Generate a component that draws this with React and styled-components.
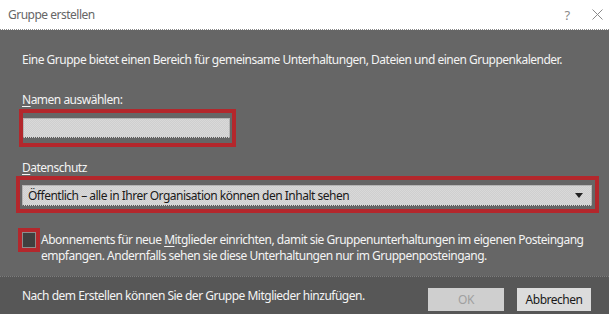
import styled, { createGlobalStyle } from 'styled-components';

const RED = '#b3272c';

const Global = createGlobalStyle`
  html, body { margin: 0; padding: 0; background: #666; }
  body {
    font-family: 'Noto Sans', 'Open Sans', sans-serif;
    font-size: 12px;
    letter-spacing: -0.5px;
  }
`;

const Dialog = styled.div`
  width: 609px;
  height: 314px;
  display: flex;
  flex-direction: column;
  overflow: hidden;
`;

const TitleBar = styled.div`
  height: 29px;
  flex: none;
  background: #fff;
  display: flex;
  align-items: center;
  padding-left: 8px;
  color: #666;
  font-size: 12px;
  border-bottom: 1px dotted #8a8a8a;
`;

const Title = styled.div`
  flex: 1;
`;

const TitleButton = styled.div`
  width: ${p => p.$w}px;
  display: flex;
  justify-content: center;
  align-items: center;
  color: #8a8a8a;
  font-size: 13px;
`;

const Body = styled.div`
  flex: 1;
  background: #666;
  color: #f4f4f4;
  padding: 22px 0 0 0;
  line-height: 16px;
`;

const Intro = styled.p`
  margin: 0 0 0 22px;
`;

const Label = styled.div`
  margin: ${p => p.$top}px 0 0 22px;
  u { text-decoration: underline; text-underline-offset: 2px; }
`;

const Highlight = styled.div`
  display: ${p => (p.$inline ? 'inline-flex' : 'flex')};
  border: 4px solid ${RED};
  padding: ${p => p.$pad};
  margin: ${p => p.$margin};
  width: ${p => (p.$width ? p.$width + 'px' : 'auto')};
  box-sizing: border-box;
`;

const Field = styled.div`
  height: ${p => p.$h}px;
  flex: 1;
  background-color: #d5d5d5;
  background-image: repeating-conic-gradient(#d9d9d9 0 25%, #cfcfcf 0 50%);
  background-size: 2px 2px;
  border: 1px solid #b5b5b5;
  border-bottom: 1px dotted #5a5a5a;
  box-sizing: border-box;
  display: flex;
  align-items: center;
  padding: 0 8px 0 5px;
  color: #1a1a1a;
  font-size: 12px;
`;

const SelectText = styled.span`
  flex: 1;
`;

const CheckRow = styled.div`
  display: flex;
  align-items: flex-start;
  margin: 15px 0 0 18px;
`;

const Box = styled.div`
  width: 14px;
  height: 16px;
  box-sizing: border-box;
  background: #3f3f3f;
  border: 1px solid #8c8c8c;
`;

const CheckText = styled.div`
  margin: 4px 0 0 1px;
  width: 560px;
  u { text-decoration: underline; text-underline-offset: 2px; }
`;

const Footer = styled.div`
  height: 37px;
  flex: none;
  background: #575757;
  border-top: 1px dotted #7d7d7d;
  display: flex;
  align-items: center;
  padding: 0 18px 0 22px;
  color: #f4f4f4;
`;

const FooterText = styled.div`
  flex: 1;
`;

const Button = styled.div`
  width: ${p => p.$w}px;
  height: 23px;
  margin-left: ${p => p.$ml}px;
  margin-top: 8px;
  display: flex;
  align-items: center;
  justify-content: center;
  background: ${p => (p.$disabled ? '#cfcfcf' : '#dcdcdc')};
  color: ${p => (p.$disabled ? '#a0a0a0' : '#1a1a1a')};
  font-size: 12px;
`;

export default function App() {
  return (
    <>
      <Global />
      <Dialog>
        <TitleBar>
          <Title>Gruppe erstellen</Title>
          <TitleButton $w={36}>?</TitleButton>
          <TitleButton $w={24}>
            <svg width="11" height="11" viewBox="0 0 11 11">
              <path d="M0.5 0.5 L10.5 10.5 M10.5 0.5 L0.5 10.5" stroke="#8a8a8a" strokeWidth="1" />
            </svg>
          </TitleButton>
        </TitleBar>
        <Body>
          <Intro>Eine Gruppe bietet einen Bereich für gemeinsame Unterhaltungen, Dateien und einen Gruppenkalender.</Intro>
          <Label $top={24}><u>N</u>amen auswählen:</Label>
          <Highlight $inline $width={217} $pad="5px 2px 5px 0" $margin="1px 0 0 19px">
            <Field $h={20} />
          </Highlight>
          <Label $top={13}><u>D</u>atenschutz</Label>
          <Highlight $width={583} $pad="5px 3px 3px 2px" $margin="0 0 0 16px">
            <Field $h={21}>
              <SelectText>Öffentlich – alle in Ihrer Organisation können den Inhalt sehen</SelectText>
              <svg width="8" height="5" viewBox="0 0 8 5">
                <path d="M0 0 H8 L4 5 Z" fill="#222" />
              </svg>
            </Field>
          </Highlight>
          <CheckRow>
            <Highlight $inline $pad="0">
              <Box />
            </Highlight>
            <CheckText>
              Abonnements für neue <u>M</u>itglieder einrichten, damit sie Gruppenunterhaltungen im eigenen Posteingang empfangen. Andernfalls sehen sie diese Unterhaltungen nur im Gruppenposteingang.
            </CheckText>
          </CheckRow>
        </Body>
        <Footer>
          <FooterText>Nach dem Erstellen können Sie der Gruppe Mitglieder hinzufügen.</FooterText>
          <Button $w={76} $ml={0} $disabled>OK</Button>
          <Button $w={74} $ml={13}>Abbrechen</Button>
        </Footer>
      </Dialog>
    </>
  );
}
